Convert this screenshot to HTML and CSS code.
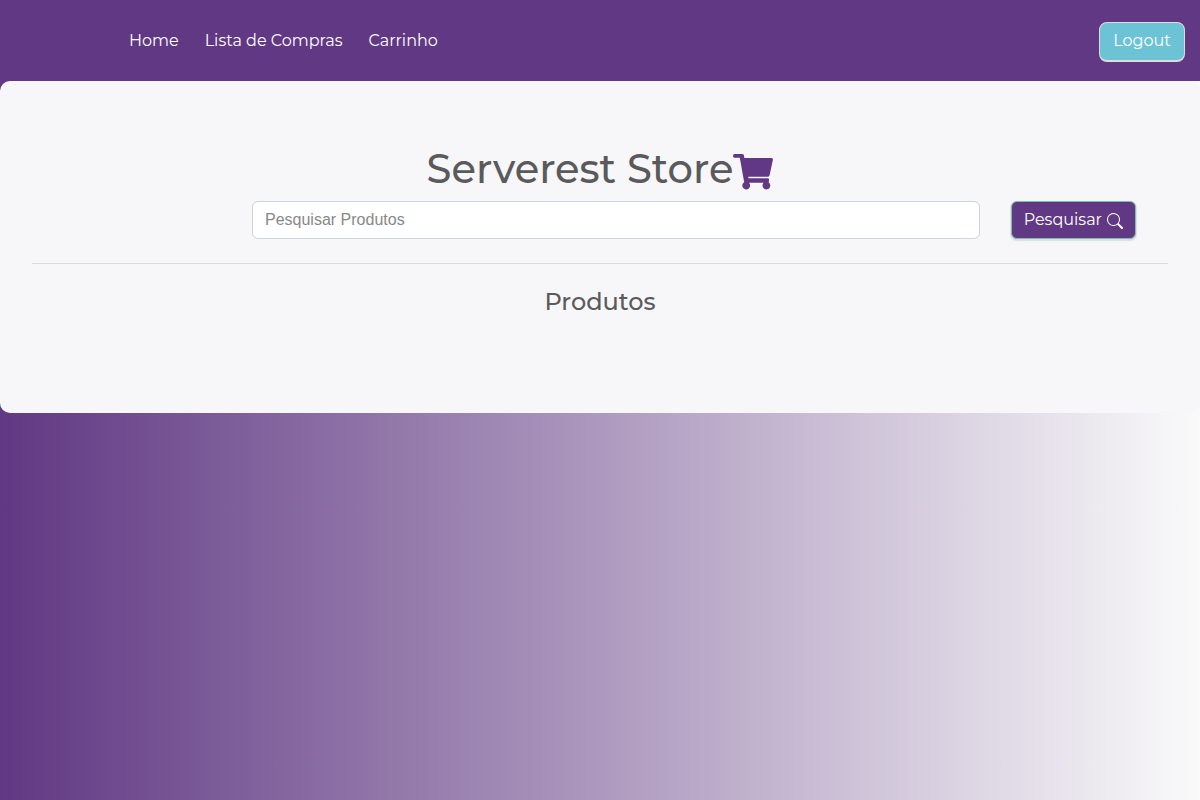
FILE: index.html
```html
<!DOCTYPE html>
<html lang="pt-BR">
<head>
<meta charset="utf-8">
<meta name="viewport" content="width=device-width, initial-scale=1">
<title>Serverest Store</title>
<link rel="stylesheet" href="styles.css">
</head>
<body>
<header class="navbar">
  <nav class="nav-links">
    <a class="nav-link" href="#home">Home</a>
    <a class="nav-link" href="#lista">Lista de Compras</a>
    <a class="nav-link" href="#carrinho">Carrinho</a>
  </nav>
  <button class="btn btn-logout" type="button">Logout</button>
</header>
<main class="store">
  <h1 class="store-title">Serverest Store<svg class="cart-icon" viewBox="0 0 40 40" aria-hidden="true"><path d="M1.700 2H9.200a1.700 1.700 0 0 1 1.650 1.350L11.400 6H38.200a1.700 1.700 0 0 1 1.650 2.050L36.600 23.300a1.700 1.700 0 0 1-1.650 1.350H15.200l.4 1.700H34.400a1.700 1.700 0 0 1 1.650 2.050l-.4 1.900a3.900 3.900 0 1 1-5.100.5H16a3.900 3.900 0 1 1-4.800-.6L6.800 5.700H1.700A1.700 1.700 0 0 1 0 4V3.700A1.700 1.700 0 0 1 1.700 2z"/></svg></h1>
  <form class="search" role="search">
    <input class="search-input" type="search" placeholder="Pesquisar Produtos" aria-label="Pesquisar Produtos">
    <button class="btn btn-search" type="button">Pesquisar
      <svg class="search-icon" viewBox="0 0 16 16" aria-hidden="true"><path d="M11.742 10.344a6.500 6.500 0 1 0-1.397 1.398h-.001c.03.040.062.078.098.115l3.850 3.850a1 1 0 0 0 1.415-1.414l-3.850-3.850a1.007 1.007 0 0 0-.115-.1zM12 6.500a5.500 5.500 0 1 1-11 0 5.500 5.500 0 0 1 11 0z"/></svg>
    </button>
  </form>
  <hr class="divider">
  <h2 class="section-title">Produtos</h2>
</main>
</body>
</html>
```
FILE: styles.css
```css
* { box-sizing: border-box; }

body {
  margin: 0;
  min-height: 100vh;
  background: linear-gradient(to right, #603883, #fafafa);
  color: #5a5a5a;
  font-family: Montserrat, Inter, sans-serif;
  font-size: 16px;
  line-height: 24px;
}

.navbar {
  display: flex;
  align-items: center;
  justify-content: space-between;
  min-height: 81px;
  padding: 0 15px 0 129px;
  background: #603883;
}

.nav-links { display: flex; gap: 26px; }

.nav-link { color: #fff; text-decoration: none; }

.btn {
  border-radius: 6px;
  color: #fff;
  font: inherit;
  white-space: nowrap;
  cursor: pointer;
}

.btn-logout {
  min-width: 86px;
  margin-top: 3px;
  padding: 6px 12px 7px;
  border: 1px solid #ddd;
  border-bottom-width: 2px;
  border-radius: 8px;
  background: #6cc3d5;
}

.store {
  min-height: 332px;
  padding: 64px 32px;
  border-radius: 10px;
  background: #f7f7fa;
}

.store-title {
  display: flex;
  align-items: center;
  justify-content: center;
  margin: 0 0 8px;
  font-size: 40px;
  font-weight: 500;
  line-height: 48px;
}

.cart-icon { width: 40px; height: 40px; margin-top: 6px; fill: #603883; }

.search { display: flex; gap: 31px; padding: 0 32px 0 220px; }

.search-input {
  flex: 1;
  min-width: 0;
  height: 38px;
  padding: 6px 12px;
  border: 1px solid #ced4da;
  border-radius: 6px;
  background: #fff;
  color: #555;
  font-family: "Liberation Sans", Arial, sans-serif;
  font-size: 16px;
  appearance: none;
}

.search-input::placeholder { color: #888; opacity: 1; }

.btn-search {
  display: flex;
  align-items: center;
  justify-content: center;
  gap: 5px;
  min-width: 125px;
  height: 38px;
  padding: 6px 12px;
  border: 1px solid #78c2ad;
  box-shadow: 0 1px 1px 1px #ddd;
  background: #603883;
}

.search-icon { width: 16px; height: 16px; margin-top: 2px; fill: #fff; }

.divider { margin: 24px 0; border: 0; border-top: 1px solid #dbdbde; }

.section-title {
  margin: 0;
  font-size: 24px;
  font-weight: 500;
  line-height: 28px;
  text-align: center;
}
```
